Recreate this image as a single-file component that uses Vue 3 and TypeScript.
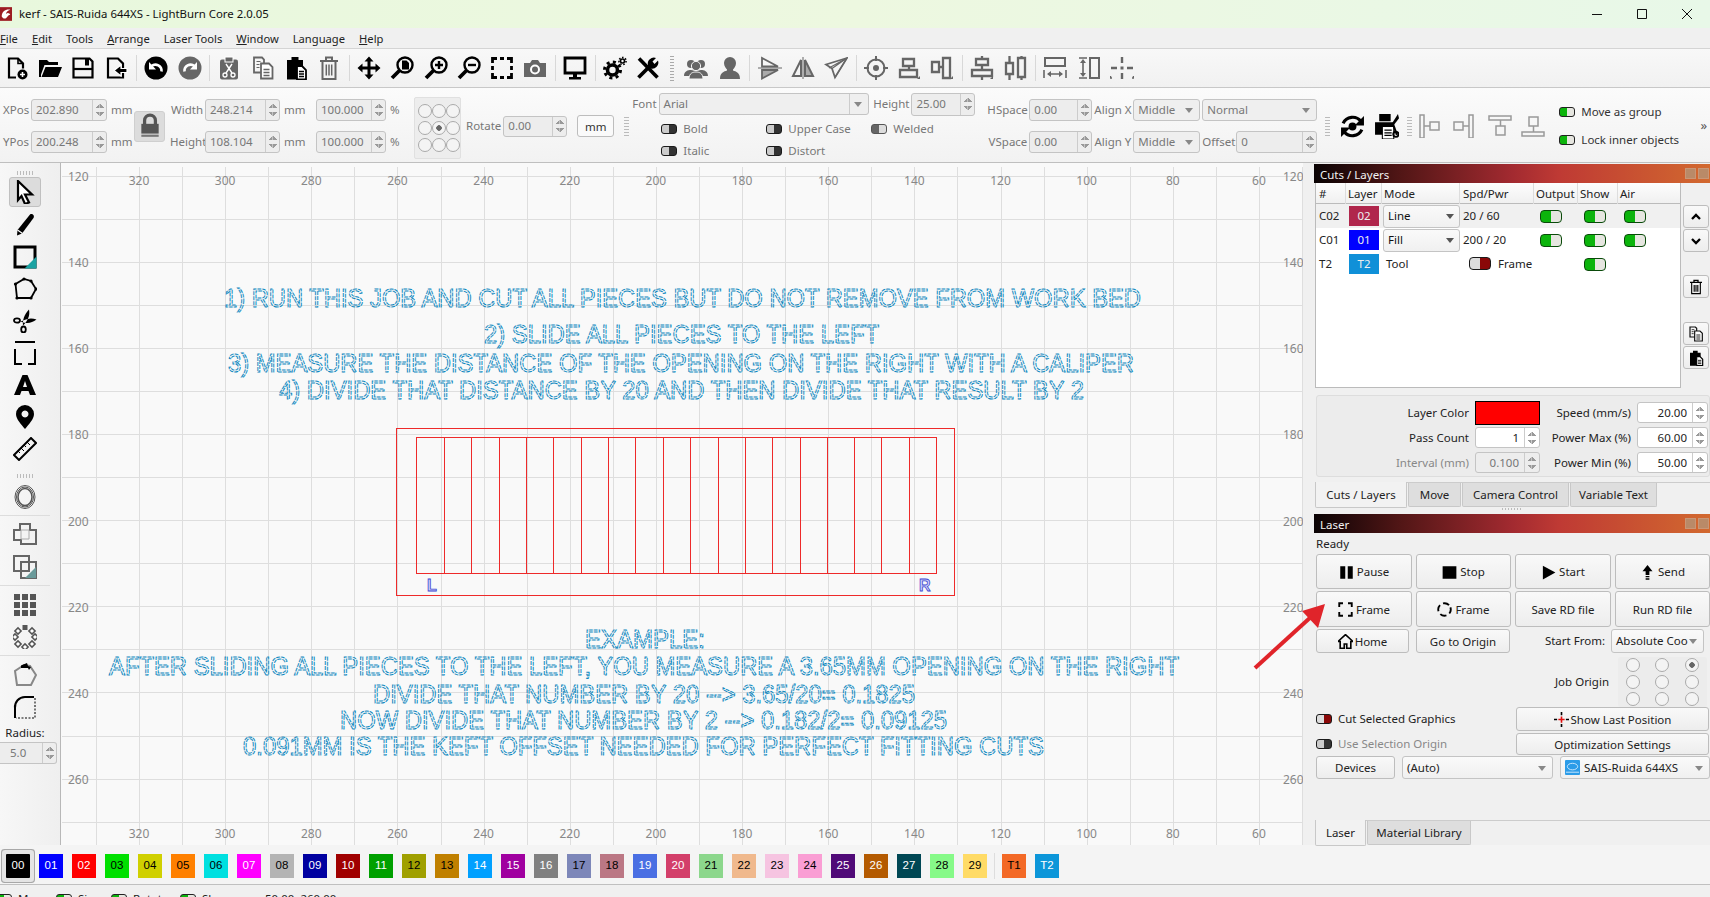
<script setup lang="ts">
const g = '#666'
const k = '#000'
const line = (d: string, c = k, w = 2.2) => `<path d="${d}" fill="none" stroke="${c}" stroke-width="${w}"/>`
const fill = (d: string, c = k) => `<path d="${d}" fill="${c}"/>`
const mag = (inner: string) => `<circle cx="15" cy="9" r="7.5" fill="none" stroke="#000" stroke-width="2.4"/><path d="M9.5 14.5L2 22" stroke="#000" stroke-width="3.8"/>${inner}`

const icons: Record<string, string> = {
  new: line('M11 21.5H4V2.5h9l5 5v5') + line('M13 2.5v5h5', k, 1.6) + '<circle cx="17.5" cy="18.5" r="5" fill="#000"/>' + line('M17.5 16v5M15 18.5h5', '#fff', 1.6),
  open: fill('M1 21V4h8l2 2h9v3H6.5L3 18.5V21zM7.5 11H24l-4 10H3.5z'),
  save: line('M2.5 2.5h16l3 3v16h-19z') + line('M2.5 13h19') + fill('M14 2.5h4v7h-4z'),
  import: line('M4 21.5v-19h10l5 5v14z') + '<path d="M23 12.5h-6v-3.5l-7 5.5 7 5.5v-3.5h6z" fill="#000" stroke="#fff" stroke-width="1.2"/>',
  undo: '<circle cx="12" cy="12" r="11.5" fill="#000"/>' + line('M17.5 15.5a6.2 6.2 0 0 0-10-5.5', '#fff', 2.6) + fill('M5 6v7.5h7z', '#fff'),
  redo: `<circle cx="12" cy="12" r="11.5" fill="${g}"/>` + line('M6.5 15.5a6.2 6.2 0 0 1 10-5.5', '#fff', 2.6) + fill('M19 6v7.5h-7z', '#fff'),
  cut: `<rect x="3" y="3.5" width="18" height="20" rx="2" fill="${g}"/><rect x="8" y="1" width="8" height="5" fill="${g}" stroke="#fff"/>` + line('M9 8l6 9M15 8l-6 9', '#fff', 1.4) + '<circle cx="8" cy="19" r="2" fill="none" stroke="#fff" stroke-width="1.3"/><circle cx="16" cy="19" r="2" fill="none" stroke="#fff" stroke-width="1.3"/>',
  copy: line('M3 1.5h8l2 2v13H3z', g, 1.8) + `<path d="M10 7.5h8l3.5 3.5v11.5H10z" fill="#fff" stroke="${g}" stroke-width="1.8"/>` + line('M12.5 13.5h6M12.5 16.5h6M12.5 19.5h6', g, 1.4) + line('M5.5 5.5h4M5.5 8.5h3M5.5 11.5h3', g, 1.2),
  paste: fill('M3 4h4.5V1h7v3H19v6h-6v13.5H3z') + '<path d="M13 10h5l4 4v9.5h-9z" fill="#fff" stroke="#000" stroke-width="1.8"/>' + line('M15 15.5h5M15 18h5M15 20.5h5', k, 1.3),
  delete: line('M3 5h18M9 5V1.5h6V5', g, 2) + line('M5.5 5v18h13V5', g, 2) + line('M9.3 8.5v11M12 8.5v11M14.7 8.5v11', g, 1.5),
  move: fill('M12 .5l4.5 5h-3V10.5h5v-3l5 4.5-5 4.5v-3h-5v5h3l-4.5 5-4.5-5h3v-5h-5v3L.5 12l5-4.5v3h5v-5h-3z'),
  zoompage: mag(fill('M12 4.5h4.5l2.5 2.5v6.5h-7z')),
  zoomin: mag(line('M15 5v8M11 9h8', k, 2.4)),
  zoomout: mag(line('M11 9h8', k, 2.4)),
  marquee: line('M2.5 7V2.5H7M17 2.5h4.5V7M21.5 17v4.5H17M7 21.5H2.5V17M10 2.5h4M10 21.5h4M2.5 10v4M21.5 10v4', k, 2.8),
  camera: fill('M1 7h6l2-3h6l2 3h6v14H1z', g) + '<circle cx="12" cy="13.5" r="5" fill="#fff"/>' + `<circle cx="12" cy="13.5" r="3" fill="${g}"/>`,
  monitor: line('M2 2h20v15H2z', k, 2.8) + fill('M10 18h4v3h4v2.5H6V21h4z'),
  gears: '<circle cx="9.5" cy="14" r="5" fill="none" stroke="#000" stroke-width="3.6"/><circle cx="9.5" cy="14" r="8" fill="none" stroke="#000" stroke-width="3" stroke-dasharray="3 3.3"/><circle cx="19.5" cy="5" r="2" fill="none" stroke="#000" stroke-width="1.6"/><circle cx="19.5" cy="5" r="3.6" fill="none" stroke="#000" stroke-width="1.5" stroke-dasharray="1.6 1.6"/>',
  tools: line('M3 2.5l18.5 19', k, 3.6) + line('M2.5 21.5L14 10', k, 3.8) + fill('M12 9.5A6.2 6.2 0 0 1 20 2l-3.5 3.5 2 2.5 3.5-3.5a6.2 6.2 0 0 1-7.5 8z'),
  people: `<g fill="${g}"><circle cx="7" cy="8" r="4"/><circle cx="17" cy="8" r="4"/><path d="M0 20c0-5 4-6 7-6l5 1 5-1c3 0 7 1 7 6z"/></g><circle cx="12" cy="10" r="4.6" fill="${g}" stroke="#f3f3f3"/><path d="M5 23c0-6 4-7 7-7s7 1 7 7z" fill="${g}" stroke="#f3f3f3"/>`,
  person: fill('M12 1a6 6 0 0 1 6 6c0 3-2 5.500-3 6.500v1c3 1 7 2 7 8.500H2c0-6.500 4-7.500 7-8.500v-1c-1-1-3-3.500-3-6.500a6 6 0 0 1 6-6z', g),
  flip: line('M4 2v8.500l16 0z', g, 1.8) + fill('M4 14v8.500l16-8.500z', '#aaa') + line('M4 14v8.500l16-8.500z', g, 1.8) + line('M0 12h24', g, 1),
  mirror: line('M10 4v16H2z', g, 2) + fill('M14 4v16h8z', '#aaa') + line('M14 4v16h8z', g, 2) + line('M12 1v22', g, 1),
  fold: line('M23 2L2 8.500l6 4 3 9z', g, 1.8) + line('M23 2L8 12.500M23 2L11 21.500M23 2L5 12', g, 1.2),
  target: `<circle cx="12" cy="12" r="8.500" fill="none" stroke="${g}" stroke-width="2"/><circle cx="12" cy="12" r="3" fill="${g}"/>` + line('M12 0v5M12 19v5M0 12h5M19 12h5', g, 2),
  algc: line('M6 3h11v7H6zM3 14h17v7H3zM12 10v4', g, 2.3) + fill('M20 23l3-3v3z', g),
  algh: line('M2 6h7v10H2zM13 2h7v20h-7zM9 11h4', g, 2.3) + fill('M20 23l3-3v3z', g),
  algv: line('M6 3h12v6H6zM2 14h20v6H2zM12 0v3M12 9v5M12 20v4', g, 2.300) + fill('M20 23l3-3v3z', g),
  algw: line('M2 7h7v11H2zM14 2h7v19h-7zM5.500 0v7M5.500 18v6M17.500 0v2M17.500 21v3', g, 2.300),
  dist1: line('M2 2h20v8H2z', g, 2) + line('M1 14v8M23 14v8M5 18h14', g, 1.6) + fill('M4 18l4-3v6zM20 18l-4-3v6z', g),
  dist2: line('M13 2h9v20h-9z', g, 2) + line('M2 2h8M2 22h8M6 5v14', g, 1.600) + fill('M6 3l-3 4h6zM6 21l-3-4h6z', g),
  center: line('M12 1v6M12 17v6M1 12h6M17 12h6', g, 2.4) + fill('M10.500 10.500h3v3h-3z', g) + line('M22 22h1.500v-2', g, 1.5) + line('M2 22H.500v-2', g, 1.5),
  sync: '<circle cx="12" cy="12" r="3.800" fill="#000"/>' + line('M3 9A10 10 0 0 1 20 7M21 15A10 10 0 0 1 4 17', k, 3) + fill('M23 2v9h-9zM1 22v-9h9z'),
  printcut: fill('M5 0h11v7H5zM1 8h18v12H1z') + '<rect x="8" y="12" width="11" height="12" fill="#fff" stroke="#000"/>' + line('M10 15.500h7M10 18h7M10 20.500h7', k, 1.200) + line('M22 20L18 9', k, 2) + fill('M23 0l1 4-6 8-2-1z') + '<circle cx="21" cy="19.500" r="2.500" fill="none" stroke="#000" stroke-width="1.800"/>',
  disa1: line('M2 1h4v23H2zM12 8h9v8h-9zM6 12h6', '#999', 1.500),
  disa2: line('M18 1h4v23h-4zM3 8h9v8H3zM12 12h6', '#999', 1.500),
  disa3: line('M1 2h22v4H1zM8 12h9v9H8zM12.500 6v6', '#999', 1.500),
  disa4: line('M1 18h22v4H1zM8 3h9v9H8zM12.500 12v6', '#999', 1.500),
  pointer: '<path d="M5 1l14 13.500h-7l4 8-4 1.500-3.500-8L5 20z" fill="#fff" stroke="#000" stroke-width="2.200"/>',
  pencil: fill('M17 1.500c2-1.500 5 1 3.500 3.500L9 20.500l-5 2 .5-5.500z') + line('M4.500 17l5 3.500', '#fff', 1.200),
  rect: line('M2 2h20v20H2z', k, 3) + fill('M23.500 11.500v12H11.500z', '#1aa3a3'),
  poly: line('M4 21L2.500 7 11 2l7 2 5 8-5 9z', k, 1.800) + '<g fill="#000"><circle cx="4" cy="21" r="1.600"/><circle cx="2.500" cy="7" r="1.600"/><circle cx="11" cy="2" r="1.600"/><circle cx="18" cy="4" r="1.600"/><circle cx="23" cy="12" r="1.600"/><circle cx="18" cy="21" r="1.600"/></g>',
  scissors: '<ellipse cx="4" cy="11.500" rx="3" ry="2.200" fill="none" stroke="#000" stroke-width="1.800"/><ellipse cx="10.500" cy="20.500" rx="2.300" ry="3" fill="none" stroke="#000" stroke-width="1.800"/>' + fill('M7.500 12.500c3 1 5 1.500 7 1.500 3 0 6-1.500 9-3.500-3-1-6-1.500-9-.5-2 .5-4 1.500-7 2.500zM10 16.500c-.500-5 1-11 6-16 .500 3 .500 6-1 9-1 2.500-3 5-5 7z'),
  cutshape: line('M2 1h20M2 8v15h7M22 8v15h-7', k, 2),
  text: fill('M9.500 2h5L23 22h-6l-1.500-4h-7L7 22H1zM10 14h4l-2-6z'),
  pin: '<path fill-rule="evenodd" d="M12 0a9 9 0 0 1 9 9c0 5-5 10-9 15-4-5-9-10-9-15a9 9 0 0 1 9-9zm0 5.500a3.500 3.500 0 1 0 .01 0z" fill="#000"/>',
  ruler: line('M1 18L18 1l5 5L6 23z', k, 2) + line('M5 14l2 2M8 11l3 3M11 8l2 2M14 5l3 3', k, 1),
  offset: '<ellipse cx="12" cy="12" rx="10" ry="11.500" fill="none" stroke="#555" stroke-width="1"/><ellipse cx="12" cy="12" rx="8.500" ry="10" fill="none" stroke="#555" stroke-width="1"/><ellipse cx="12" cy="12" rx="7" ry="8.500" fill="none" stroke="#555" stroke-width="1.500"/>',
  union: line('M1 7h6V1h10v6h6v14H8v-4H1z', g, 2) + line('M8 7h8v9H8z', '#aaa', 1),
  subtract: line('M1 1h15v15H1z', g, 2) + line('M8 7h15v16H8z', g, 2) + fill('M23 12v11H12z', '#6a9a9a'),
  grid: `<g fill="#555">${[1, 9, 17].flatMap((y) => [1, 9, 17].map((x) => `<rect x="${x}" y="${y}" width="6" height="6"/>`)).join('')}</g>`,
  carray: `<g fill="#fff" stroke="#555" stroke-width="1.500">${[[19, 6], [22, 12], [19, 19], [12, 22], [5, 19], [2, 12], [5, 6]].map(([x, y]) => `<rect x="${x - 2.200}" y="${y - 2.200}" width="4.400" height="4.400" transform="rotate(45 ${x} ${y})"/>`).join('')}</g><rect x="9.500" y="0" width="5" height="5" fill="#555"/>`,
  polyedit: line('M4 22L2 8l9-6 6 1 6 9-5 10z', '#888', 2) + fill('M8 2.500l6-2.500 1 3 3 1-2 3-1-2-7 0z'),
  corner: line('M2 23V13A10 10 0 0 1 12 2h9', k, 2) + '<path d="M22 3v20H3" fill="none" stroke="#555" stroke-width="1.600" stroke-dasharray="2 1.500"/>',
}

type Tb = { i?: string; sep?: boolean; handle?: boolean }
const toolbar: Tb[] = [
  { i: 'new' }, { i: 'open' }, { i: 'save' }, { i: 'import' }, { sep: true },
  { i: 'undo' }, { i: 'redo' }, { sep: true },
  { i: 'cut' }, { i: 'copy' }, { i: 'paste' }, { i: 'delete' }, { sep: true },
  { i: 'move' }, { i: 'zoompage' }, { i: 'zoomin' }, { i: 'zoomout' }, { i: 'marquee' }, { i: 'camera' }, { sep: true },
  { i: 'monitor' }, { sep: true }, { i: 'gears' }, { i: 'tools' }, { handle: true },
  { i: 'people' }, { i: 'person' }, { sep: true },
  { i: 'flip' }, { i: 'mirror' }, { i: 'fold' }, { sep: true },
  { i: 'target' }, { i: 'algc' }, { i: 'algh' }, { sep: true },
  { i: 'algv' }, { i: 'algw' }, { sep: true },
  { i: 'dist1' }, { i: 'dist2' }, { i: 'center' },
]

const sideTop = ['pencil', 'rect', 'poly', 'scissors', 'cutshape', 'text', 'pin', 'ruler']
const menus = [
  { u: 'F', r: 'ile' }, { u: 'E', r: 'dit' }, { u: '', r: 'Tools' }, { u: 'A', r: 'rrange' },
  { u: '', r: 'Laser Tools' }, { u: 'W', r: 'indow' }, { u: '', r: 'Language' }, { u: 'H', r: 'elp' },
]

const snap = (v: number) => Math.floor(v) + 0.5
const xGrid = Array.from({ length: 28 }, (_, n) => snap(96.4 + n * 43.08))
const yGrid = Array.from({ length: 16 }, (_, n) => snap(176 + n * 43.08))
const xLabels = Array.from({ length: 14 }, (_, n) => ({ x: 139 + n * 86.15, t: String(320 - n * 20) }))
const yLabels = Array.from({ length: 8 }, (_, n) => ({ y: 176 + n * 86.15, t: String(120 + n * 20) }))
const cuts = [444, 471.5, 499, 526, 553.5, 581, 608.5, 635.5, 663, 690.5, 718, 745, 772.5, 800, 827, 854.5, 881.5, 909].map(snap)

const jobLines = [
  { x: 224, y: 306.5, w: 917, t: '1) RUN THIS JOB AND CUT ALL PIECES BUT DO NOT REMOVE FROM WORK BED' },
  { x: 484, y: 342.5, w: 395, t: '2) SLIDE ALL PIECES TO THE LEFT' },
  { x: 228, y: 371.5, w: 906, t: '3) MEASURE THE DISTANCE OF THE OPENING ON THE RIGHT WITH A CALIPER' },
  { x: 279, y: 399, w: 805, t: '4) DIVIDE THAT DISTANCE BY 20 AND THEN DIVIDE THAT RESULT BY 2' },
  { x: 585, y: 648, w: 120, t: 'EXAMPLE:' },
  { x: 109, y: 675, w: 1070, t: 'AFTER SLIDING ALL PIECES TO THE LEFT, YOU MEASURE A 3.65MM OPENING ON THE RIGHT' },
  { x: 373, y: 703, w: 542, t: 'DIVIDE THAT NUMBER BY 20 --> 3.65/20= 0.1825' },
  { x: 340, y: 729, w: 607, t: 'NOW DIVIDE THAT NUMBER BY 2 --> 0.182/2= 0.09125' },
  { x: 243, y: 755, w: 801, t: '0.091MM IS THE KEFT OFFSET NEEDED FOR PERFECT FITTING CUTS' },
]

const swatches = [
  ['00', '#000000', '#fff'], ['01', '#0000ff', '#fff'], ['02', '#ff0000', '#fff'], ['03', '#00e000', '#000'],
  ['04', '#d0d000', '#000'], ['05', '#ff8000', '#000'], ['06', '#00e0e0', '#000'], ['07', '#ff00ff', '#fff'],
  ['08', '#b4b4b4', '#000'], ['09', '#0000a0', '#fff'], ['10', '#a00000', '#fff'], ['11', '#00a000', '#fff'],
  ['12', '#a0a000', '#000'], ['13', '#c08000', '#000'], ['14', '#00a0ff', '#fff'], ['15', '#a000a0', '#fff'],
  ['16', '#808080', '#fff'], ['17', '#7d87b9', '#000'], ['18', '#bb7784', '#000'], ['19', '#4a6fe3', '#fff'],
  ['20', '#d33f6a', '#fff'], ['21', '#8cd78c', '#000'], ['22', '#f0b98d', '#000'], ['23', '#f6c4e1', '#000'],
  ['24', '#fa9ed4', '#000'], ['25', '#500a78', '#fff'], ['26', '#b45a00', '#fff'], ['27', '#004754', '#fff'],
  ['28', '#86fa88', '#000'], ['29', '#ffdb66', '#000'],
]
</script>

<template>
  <div class="app">
    <header class="titlebar">
      <svg class="logo" viewBox="0 0 14 16"><rect width="14" height="16" fill="#9c1c22" /><path d="M2 11c0-6 5-9 10-8-3 1-5 3-5 5 2-2 4-1 5 1-2 0-3 2-5 4-2 1-4 0-5-2z" fill="#fff" /></svg>
      <span class="title">kerf - SAIS-Ruida 644XS - LightBurn Core 2.0.05</span>
      <div class="wincontrols">
        <svg viewBox="0 0 12 12"><path d="M1 6.500h10" stroke="#111" /></svg>
        <svg viewBox="0 0 12 12"><path d="M1.500 1.500h9v9h-9z" fill="none" stroke="#111" /></svg>
        <svg viewBox="0 0 12 12"><path d="M1 1l10 10M11 1L1 11" stroke="#111" /></svg>
      </div>
    </header>

    <nav class="menubar">
      <span v-for="m in menus" :key="m.r"><u>{{ m.u }}</u>{{ m.r }}</span>
    </nav>

    <div class="toolbar">
      <template v-for="(t, n) in toolbar" :key="n">
        <span v-if="t.sep" class="tsep"></span>
        <span v-else-if="t.handle" class="thandle"></span>
        <svg v-else class="ticon" viewBox="0 0 24 24" v-html="icons[t.i as string]"></svg>
      </template>
    </div>

    <div class="props">
      <div class="pgrid g1">
        <label>XPos</label><div class="spin dis"><span>202.890</span><i></i></div><em>mm</em>
        <label>YPos</label><div class="spin dis"><span>200.248</span><i></i></div><em>mm</em>
      </div>
      <div class="lock">
        <svg viewBox="0 0 24 24"><path d="M7 11V7a5 5 0 0 1 10 0v4" fill="none" stroke="#555" stroke-width="3" /><rect x="4" y="10" width="16" height="9" fill="#555" /><rect x="4" y="20" width="16" height="2" fill="#777" /></svg>
      </div>
      <div class="pgrid g2">
        <label>Width</label><div class="spin dis"><span>248.214</span><i></i></div><em>mm</em><div class="spin dis"><span>100.000</span><i></i></div><em>%</em>
        <label>Height</label><div class="spin dis"><span>108.104</span><i></i></div><em>mm</em><div class="spin dis"><span>100.000</span><i></i></div><em>%</em>
      </div>
      <div class="originbox">
        <span v-for="n in 9" :key="n" class="radio" :class="{ dot: n === 5 }"></span>
      </div>
      <div class="rotate"><label>Rotate</label><div class="spin dis"><span>0.00</span><i></i></div></div>
      <button class="mmbtn">mm</button>
      <span class="phandle"></span>
      <div class="fontgroup">
        <div class="frow">
          <label>Font</label>
          <div class="select dis fontsel"><span>Arial</span></div>
          <label class="hlabel">Height</label>
          <div class="spin dis hspin"><span>25.00</span><i></i></div>
        </div>
        <div class="ftoggles">
          <span class="chk"><b class="tog sm off"></b>Bold</span>
          <span class="chk"><b class="tog sm off"></b>Upper Case</span>
          <span class="chk"><b class="tog sm wel"></b>Welded</span>
          <span class="chk"><b class="tog sm off"></b>Italic</span>
          <span class="chk"><b class="tog sm off"></b>Distort</span>
        </div>
      </div>
      <div class="pgrid g3">
        <label>HSpace</label><div class="spin dis"><span>0.00</span><i></i></div><label>Align X</label><div class="select dis"><span>Middle</span></div><div class="select dis span2"><span>Normal</span></div>
        <label>VSpace</label><div class="spin dis"><span>0.00</span><i></i></div><label>Align Y</label><div class="select dis"><span>Middle</span></div><label class="off">Offset</label><div class="spin dis"><span>0</span><i></i></div>
      </div>
      <span class="phandle h2"></span>
      <svg class="bigi sync" viewBox="0 0 24 24" v-html="icons.sync"></svg>
      <svg class="bigi print" viewBox="0 0 24 24" v-html="icons.printcut"></svg>
      <span class="phandle h3"></span>
      <svg class="dis-i" viewBox="0 0 24 24" v-html="icons.disa1"></svg>
      <svg class="dis-i" viewBox="0 0 24 24" v-html="icons.disa2"></svg>
      <svg class="dis-i d3" viewBox="0 0 24 24" v-html="icons.disa3"></svg>
      <svg class="dis-i" viewBox="0 0 24 24" v-html="icons.disa4"></svg>
      <div class="groupchecks">
        <span class="chk on"><b class="tog sm gr"></b>Move as group</span>
        <span class="chk on"><b class="tog sm gr"></b>Lock inner objects</span>
      </div>
      <span class="more">»</span>
    </div>

    <main class="middle">
      <aside class="sidebar">
        <span class="shandle"></span>
        <div class="selbtn"><svg class="sicon" viewBox="0 0 24 24" v-html="icons.pointer"></svg></div>
        <svg v-for="s in sideTop" :key="s" class="sicon" viewBox="0 0 24 24" v-html="icons[s]"></svg>
        <span class="shandle h"></span>
        <svg class="sicon" viewBox="0 0 24 24" v-html="icons.offset"></svg>
        <hr />
        <svg class="sicon" viewBox="0 0 24 24" v-html="icons.union"></svg>
        <svg class="sicon" viewBox="0 0 24 24" v-html="icons.subtract"></svg>
        <hr />
        <svg class="sicon" viewBox="0 0 24 24" v-html="icons.grid"></svg>
        <svg class="sicon" viewBox="0 0 24 24" v-html="icons.carray"></svg>
        <hr />
        <svg class="sicon" viewBox="0 0 24 24" v-html="icons.polyedit"></svg>
        <svg class="sicon" viewBox="0 0 24 24" v-html="icons.corner"></svg>
        <span class="radlabel">Radius:</span>
        <div class="spin dis radius"><span>5.0</span><i></i></div>
      </aside>

      <section class="canvas">
        <svg class="workspace" viewBox="61 163 1242 682">
          <rect x="61" y="163" width="1242" height="682" fill="#f9f9f9" />
          <line v-for="x in xGrid" :key="x" :x1="x" :x2="x" y1="167" y2="845" class="gl" />
          <line v-for="y in yGrid" :key="y" x1="62" x2="1303" :y1="y" :y2="y" class="gl" />
          <line x1="1302.500" x2="1302.500" y1="167" y2="845" class="gl" />
          <g class="lbl">
            <text v-for="l in xLabels" :key="l.t" :x="l.x" y="185" text-anchor="middle">{{ l.t }}</text>
            <text v-for="l in xLabels" :key="l.t + 'b'" :x="l.x" y="838" text-anchor="middle">{{ l.t }}</text>
            <text v-for="l in yLabels" :key="l.t" x="68" :y="l.y + 5">{{ l.t }}</text>
            <text v-for="l in yLabels" :key="l.t + 'r'" x="1283" :y="l.y + 5">{{ l.t }}</text>
          </g>
          <text v-for="l in jobLines" :key="l.t" class="job" :x="l.x" :y="l.y" :textLength="l.w" lengthAdjust="spacingAndGlyphs">{{ l.t }}</text>
          <g class="red">
            <rect x="396.500" y="428.500" width="558" height="167" />
            <rect x="416.500" y="437.500" width="520" height="136" />
            <line v-for="x in cuts" :key="x" :x1="x" :x2="x" y1="437.500" y2="573.500" />
          </g>
          <text class="mark" x="427" y="591">L</text>
          <text class="mark" x="919" y="591">R</text>
        </svg>
      </section>

      <aside class="panels">
        <section class="cuts">
          <div class="ptitle">Cuts / Layers<span class="pbtns"><i></i><i></i></span></div>
          <div class="cutsbody">
            <div class="table">
              <div class="trow thead"><span>#</span><span>Layer</span><span>Mode</span><span>Spd/Pwr</span><span>Output</span><span>Show</span><span>Air</span></div>
              <div class="trow sel">
                <span>C02</span><span class="badge b02">02</span>
                <div class="select modesel"><span>Line</span></div>
                <span>20 / 60</span><b class="tog gr"></b><b class="tog gr"></b><b class="tog gr"></b>
              </div>
              <div class="trow">
                <span>C01</span><span class="badge b01">01</span>
                <div class="select modesel"><span>Fill</span></div>
                <span>200 / 20</span><b class="tog gr"></b><b class="tog gr"></b><b class="tog gr"></b>
              </div>
              <div class="trow">
                <span>T2</span><span class="badge bt2">T2</span>
                <span class="toolmode">Tool</span>
                <span class="framecell"><b class="tog rd"></b>Frame</span><span></span><b class="tog gr"></b><span></span>
              </div>
            </div>
            <div class="sidebtns">
              <button><svg viewBox="0 0 24 24"><path d="M6 15l6-6 6 6" fill="none" stroke="#000" stroke-width="3.500" /></svg></button>
              <button><svg viewBox="0 0 24 24"><path d="M6 9l6 6 6-6" fill="none" stroke="#000" stroke-width="3.500" /></svg></button>
              <button class="gap1"><svg viewBox="0 0 24 24"><path d="M3 5h18M9 5V2h6v3" fill="none" stroke="#000" stroke-width="2" /><path d="M5.500 5v17h13V5M9.300 9v10M12 9v10M14.700 9v10" fill="none" stroke="#000" stroke-width="1.700" /></svg></button>
              <button class="gap2"><svg viewBox="0 0 24 24" v-html="icons.copy.replaceAll(g, '#111')"></svg></button>
              <button><svg viewBox="0 0 24 24" v-html="icons.paste"></svg></button>
            </div>
          </div>
          <div class="layerform">
            <label>Layer Color</label><span class="swatchred"></span><label>Speed (mm/s)</label><div class="spin num"><span>20.00</span><i></i></div>
            <label>Pass Count</label><div class="spin num"><span>1</span><i></i></div><label>Power Max (%)</label><div class="spin num"><span>60.00</span><i></i></div>
            <label class="muted">Interval (mm)</label><div class="spin num dis"><span>0.100</span><i></i></div><label>Power Min (%)</label><div class="spin num"><span>50.00</span><i></i></div>
          </div>
          <div class="tabs">
            <span class="tab active t1">Cuts / Layers</span><span class="tab t2">Move</span><span class="tab t3">Camera Control</span><span class="tab t4">Variable Text</span>
          </div>
          <span class="vhandle"></span>
        </section>

        <section class="laser">
          <div class="ptitle">Laser<span class="pbtns"><i></i><i></i></span></div>
          <div class="ready">Ready</div>
          <div class="lbtns r1">
            <button><svg viewBox="0 0 24 24"><path d="M2 2h8v20H2zM14 2h8v20h-8z" /></svg>Pause</button>
            <button><svg viewBox="0 0 24 24"><path d="M1 2h22v20H1z" /></svg>Stop</button>
            <button><svg viewBox="0 0 24 24"><path d="M3 1l20 11L3 23z" /></svg>Start</button>
            <button><svg viewBox="0 0 24 24"><path d="M12 0l8 10h-5v6H9v-6H4zM9 17.500h6v2H9zM9 21h6v2.500H9z" /></svg>Send</button>
          </div>
          <div class="lbtns r2">
            <button><svg viewBox="0 0 24 24"><path d="M2 8V2h6M16 2h6v6M22 16v6h-6M8 22H2v-6" fill="none" stroke="#000" stroke-width="3" /></svg>Frame</button>
            <button><svg viewBox="0 0 24 24"><circle cx="12" cy="12" r="10" fill="none" stroke="#000" stroke-width="3" stroke-dasharray="10 5.700" transform="rotate(-20 12 12)" /></svg>Frame</button>
            <button>Save RD file</button>
            <button>Run RD file</button>
          </div>
          <div class="lrow3">
            <button class="home"><svg viewBox="0 0 24 24"><path d="M12 1L0 12h3.500v11H10v-7h4v7h6.500V12H24z" fill="none" stroke="#000" stroke-width="2.600" /></svg>Home</button>
            <button class="goto">Go to Origin</button>
            <label>Start From:</label>
            <div class="select sf"><span>Absolute Coo</span></div>
          </div>
          <div class="lrow4">
            <label>Job Origin</label>
            <div class="jobbox"><span v-for="n in 9" :key="n" class="radio" :class="{ dot: n === 3 }"></span></div>
          </div>
          <div class="lrow5">
            <span class="chk b"><b class="tog sm rd"></b>Cut Selected Graphics</span>
            <button><svg viewBox="0 0 24 24"><path d="M12 0v5M12 19v5M0 12h5M19 12h5" stroke="#000" stroke-width="2.600" /><path d="M12 7v10M7 12h10" stroke="#e01010" stroke-width="2.600" /></svg>Show Last Position</button>
          </div>
          <div class="lrow5 r6">
            <span class="chk muted"><b class="tog sm off"></b>Use Selection Origin</span>
            <button>Optimization Settings</button>
          </div>
          <div class="lrow7">
            <button>Devices</button>
            <div class="select auto"><span>(Auto)</span></div>
            <div class="select device"><svg viewBox="0 0 16 16"><rect width="16" height="16" rx="1" fill="#2c9ce8" /><ellipse cx="8" cy="7" rx="5.500" ry="3.500" fill="none" stroke="#cfeaff" /><path d="M1 13h14" stroke="#cfeaff" /></svg><span>SAIS-Ruida 644XS</span></div>
          </div>
          <div class="tabs lasertabs">
            <span class="tab active">Laser</span><span class="tab">Material Library</span>
          </div>
        </section>
      </aside>
    </main>

    <div class="palette">
      <span v-for="s in swatches" :key="s[0]" class="sw" :class="{ cur: s[0] === '00' }" :style="{ background: s[1], color: s[2] }">{{ s[0] }}</span>
      <span class="palsep"></span>
      <span class="sw" style="background: #f36926; color: #000">T1</span>
      <span class="sw" style="background: #0c96d9; color: #fff">T2</span>
    </div>

    <footer class="status">
      <span class="s1"><b class="tog sm gr"></b>Move</span>
      <span class="s2"><b class="tog sm gr"></b>Size</span>
      <span class="s3"><b class="tog sm gr"></b>Rotate</span>
      <span class="s4"><b class="tog sm gr"></b>Shear</span>
      <span class="coords">50.00, 260.00</span>
    </footer>

    <svg class="arrow" viewBox="0 0 100 90">
      <path d="M3 86L60 34" stroke="#e0242a" stroke-width="4" fill="none" />
      <path d="M73 22L50 29 66 46z" fill="#e0242a" />
    </svg>
  </div>
</template>

<style>
html,
body {
  margin: 0;
  background: #f0f0f0;
  overflow: hidden;
}
</style>

<style scoped>
.app {
  --ui: "Noto Sans", "Open Sans", sans-serif;
  position: relative;
  width: 1710px;
  height: 897px;
  overflow: hidden;
  display: flex;
  flex-direction: column;
  background: #f0f0f0;
  color: #222;
  font: 11.5px/1.2 var(--ui);
  white-space: nowrap;
}
button {
  font: inherit;
  color: inherit;
  padding: 1px 0 0;
  display: flex;
  align-items: center;
  justify-content: center;
  background: linear-gradient(#f9f9f9, #ededed);
  border: 1px solid #bdbdbd;
  border-radius: 3px;
}
label,
em {
  font-style: normal;
}

.titlebar {
  height: 28px;
  flex: none;
  display: flex;
  align-items: center;
  background: linear-gradient(90deg, #e8f8dd, #edf8e0 50%, #e8f8e8);
  font-size: 11.4px;
  color: #111;
}
.logo {
  width: 12px;
  height: 16px;
  margin-right: 7px;
}
.wincontrols {
  margin-left: auto;
  display: flex;
  margin-right: 17px;
  gap: 33px;
}
.wincontrols svg {
  width: 12px;
  height: 12px;
}

.menubar {
  height: 20px;
  flex: none;
  display: flex;
  align-items: center;
  gap: 14px;
  background: #f0f0f0;
  font-size: 11.2px;
  padding-top: 1px;
  box-sizing: border-box;
}

.toolbar {
  flex: none;
  display: flex;
  align-items: center;
  border-top: 1px solid #d4d4d4;
  border-bottom: 1px solid #c8c8c8;
  background: linear-gradient(#f8f8f8, #f1f1f1);
  box-sizing: border-box;
  height: 40px;
}
.ticon {
  width: 24px;
  height: 24px;
  flex: none;
  margin: 0 4.650px;
}
.tsep {
  width: 1px;
  height: 26px;
  margin: 0 2.750px;
  background: #d8d8d8;
  flex: none;
}
.thandle {
  width: 4px;
  height: 26px;
  margin: 0 5.500px;
  flex: none;
  background: radial-gradient(circle, #aaa 0.6px, transparent 0.8px) 0 0/2px 3px;
}

.props {
  height: 75px;
  flex: none;
  display: flex;
  align-items: center;
  box-sizing: border-box;
  padding-top: 2px;
  border-bottom: 1px solid #bfbfbf;
  background: linear-gradient(#fbfbfb, #f2f2f2);
  color: #777;
}
.pgrid {
  display: grid;
  row-gap: 10px;
  align-items: center;
  flex: none;
}
.pgrid > label {
  text-align: right;
}
.g1 {
  margin-left: 3px;
  grid-template-columns: 26px 76px 26px;
  column-gap: 2px;
}
.g1 em,
.g2 em {
  padding-left: 2px;
}
.lock {
  width: 31px;
  height: 31px;
  flex: none;
  margin-left: -1px;
  background: #dcdcdc;
  border: 1px solid #cfcfcf;
  border-radius: 3px;
  box-sizing: border-box;
  display: flex;
  align-items: center;
  justify-content: center;
}
.lock svg {
  width: 26px;
  height: 26px;
}
.g2 {
  margin-left: 5px;
  grid-template-columns: 33px 75px 32px 70px 12px;
  column-gap: 2px;
}
.spin {
  position: relative;
  box-sizing: border-box;
  height: 22px;
  border: 1px solid #c4c4c4;
  border-radius: 3px;
  background: #fff;
  display: flex;
  align-items: center;
  padding-left: 4px;
  padding-right: 14px;
}
.spin.dis {
  background: #ededed;
  color: #777;
}
.spin i {
  position: absolute;
  right: 0;
  top: 0;
  bottom: 0;
  width: 13px;
  border-left: 1px solid #ccc;
  background:
    linear-gradient(135deg, transparent 50%, #999 50%) 2px calc(50% - 4px)/4.500px 4px no-repeat,
    linear-gradient(225deg, transparent 50%, #999 50%) 6.500px calc(50% - 4px)/4.500px 4px no-repeat,
    linear-gradient(45deg, transparent 50%, #999 50%) 2px calc(50% + 4px)/4.500px 4px no-repeat,
    linear-gradient(315deg, transparent 50%, #999 50%) 6.500px calc(50% + 4px)/4.500px 4px no-repeat;
}
.originbox {
  width: 47px;
  height: 62px;
  margin-left: 14px;
  margin-top: 4px;
  flex: none;
  box-sizing: border-box;
  padding: 4px 3px;
  background: #ededed;
  border: 1px solid #e0e0e0;
  border-radius: 2px;
  display: grid;
  grid-template-columns: repeat(3, 1fr);
  justify-items: center;
  align-items: center;
}
.radio {
  width: 11px;
  height: 11px;
  border: 1px solid #aaa;
  border-radius: 50%;
  background: #f4f4f4;
  box-sizing: border-box;
  display: block;
}
.dot {
  background: radial-gradient(circle, #666 0 2.500px, #f4f4f4 3px);
}
.originbox .radio {
  width: 14px;
  height: 14px;
}
.rotate {
  display: flex;
  align-items: center;
  margin-left: 5px;
  gap: 2px;
  flex: none;
}
.rotate .spin {
  width: 64px;
  height: 21px;
}
.mmbtn {
  width: 37px;
  height: 22px;
  margin-left: 10px;
  flex: none;
  background: #fafafa;
  color: #333;
}
.phandle {
  width: 5px;
  height: 21px;
  flex: none;
  margin: 0 3px 0 10px;
  background: radial-gradient(circle, #bbb 0.6px, transparent 0.8px) 0 0/2px 3px;
}
.fontgroup {
  width: 343px;
  flex: none;
  margin-top: 2px;
}
.frow {
  display: flex;
  align-items: center;
  height: 24px;
}
.fontsel {
  width: 211px;
  height: 24px;
  margin-left: 2px;
}
.hlabel {
  margin-left: 4px;
}
.hspin {
  width: 64px;
  margin-left: 2px;
  height: 23px;
}
.ftoggles {
  margin-top: 2px;
  margin-left: 29px;
  display: grid;
  grid-template-columns: 105px 105px 100px;
  grid-auto-rows: 22px;
  align-items: center;
}
.chk {
  display: flex;
  align-items: center;
  gap: 6px;
}
.tog {
  display: block;
  box-sizing: border-box;
  width: 22px;
  height: 13px;
  flex: none;
  border: 1.500px solid #1a1a1a;
  border-radius: 4px;
}
.tog.sm {
  width: 16px;
  height: 10px;
  border-radius: 3px;
}
.tog.gr {
  background: linear-gradient(90deg, #0cb40c 52%, #e6e6e0 52%);
  border-color: #0a4a0a;
}
.tog.gr.sm {
  border-color: #222;
}
.tog.rd {
  background: linear-gradient(90deg, #ddd 48%, #8a0808 48%);
}
.tog.off {
  background: linear-gradient(90deg, #ccc 48%, #333 48%);
}
.tog.wel {
  background: linear-gradient(90deg, #666 52%, #ddd 52%);
  border-color: #555;
}
.g3 {
  margin-left: 12px;
  grid-template-columns: 40px 63px 37px 67px 32px 81px;
  column-gap: 2px;
}
.g3 .select {
  height: 22px;
}
.span2 {
  grid-column: span 2;
}
.select {
  position: relative;
  box-sizing: border-box;
  border: 1px solid #c4c4c4;
  border-radius: 3px;
  background: linear-gradient(#fafafa, #f0f0f0);
  display: flex;
  align-items: center;
  padding-left: 4px;
  height: 22px;
  overflow: hidden;
  white-space: nowrap;
}
.select.dis {
  background: #efefef;
  color: #777;
}
.select::after {
  content: "";
  position: absolute;
  right: 6px;
  top: calc(50% - 2px);
  border: 4px solid transparent;
  border-top: 5px solid #888;
  border-bottom: 0;
}
.fontsel::before {
  content: "";
  position: absolute;
  right: 18px;
  top: 0;
  bottom: 0;
  border-left: 1px solid #ccc;
}
.h2 {
  margin: 0 4px 0 8px;
}
.h3 {
  margin: 0 6px 0 8px;
}
.bigi {
  flex: none;
  width: 25px;
  height: 25px;
  margin-left: 6px;
}
.print {
  margin-left: 9px;
}
.dis-i {
  flex: none;
  width: 24px;
  height: 24px;
  margin-right: 9px;
}
.d3 {
  margin-left: 4px;
}
.groupchecks {
  flex: none;
  display: flex;
  flex-direction: column;
  gap: 14px;
  margin-left: 5px;
  color: #333;
}
.more {
  margin-left: auto;
  margin-right: 3px;
  color: #555;
  font-size: 13px;
}

.middle {
  flex: none;
  height: 682px;
  display: flex;
}
.sidebar {
  width: 61px;
  flex: none;
  box-sizing: border-box;
  padding-top: 8px;
  display: flex;
  flex-direction: column;
  align-items: center;
  background: linear-gradient(90deg, #f7f7f7, #efefef);
  border-right: 1px solid #b8b8b8;
  position: relative;
}
.sidebar > * {
  flex: none;
}
.shandle {
  width: 18px;
  height: 4px;
  background: radial-gradient(circle, #bbb 0.6px, transparent 0.8px) 0 0/3px 2px;
  margin-left: -10px;
}
.shandle.h {
  margin-top: 9px;
  margin-bottom: 3px;
}
.selbtn {
  width: 32px;
  height: 30px;
  margin-top: 2px;
  margin-bottom: 2px;
  background: #dcdcdc;
  border: 1px solid #c0c0c0;
  border-radius: 3px;
  display: flex;
  align-items: center;
  justify-content: center;
  box-sizing: border-box;
  margin-left: -10px;
}
.selbtn .sicon {
  margin: 0;
}
.sicon {
  width: 24px;
  height: 24px;
  margin: 4px 0 4px -10px;
}
.sidebar hr {
  width: 50px;
  margin: 2px 0 3px 0;
  align-self: flex-start;
  border: 0;
  border-top: 1px solid #ddd;
}
.radlabel {
  color: #222;
  margin-top: 3px;
  margin-left: -10px;
}
.radius {
  width: 57px;
  align-self: flex-start;
  padding-left: 10px;
  margin-top: 2px;
  border-left: 0;
  border-radius: 0 3px 3px 0;
}

.canvas {
  width: 1242px;
  flex: none;
  background: #f9f9f9;
  margin-left: 0;
}
.workspace {
  display: block;
  width: 1242px;
  height: 682px;
}
.gl {
  stroke: #dedede;
  stroke-width: 1;
}
.lbl text {
  font: 12px var(--ui);
  fill: #888;
}
.job {
  font: 25px "Liberation Sans", Arial, sans-serif;
  fill: none;
  stroke: #0d88c0;
  stroke-width: 1;
  stroke-dasharray: 4 1;
}
.red rect,
.red line {
  fill: none;
  stroke: #ee2a2a;
  stroke-width: 1;
}
.mark {
  font: bold 16px "Liberation Sans", Arial, sans-serif;
  fill: #cfd2f5;
  stroke: #3c46d4;
  stroke-width: 0.800;
}

.panels {
  flex: 1;
  min-width: 0;
  display: flex;
  flex-direction: column;
  padding-left: 11px;
  background: #f0f0f0;
}
.cuts {
  height: 347px;
  flex: none;
  display: flex;
  flex-direction: column;
  position: relative;
}
.ptitle {
  flex: none;
  margin-top: 1px;
  height: 19px;
  line-height: 21px;
  padding-left: 6px;
  color: #f2f2f2;
  display: flex;
  justify-content: space-between;
  background: linear-gradient(90deg, #0a0304, #521616 22%, #a22a30 50%, #bf3a34 62%, #d2692f 100%);
}
.pbtns {
  display: flex;
  gap: 2px;
  margin-right: 1px;
  align-items: center;
}
.pbtns i {
  width: 11px;
  height: 11px;
  border: 1px solid #c99676;
  background: #b98a68;
  box-sizing: border-box;
}
.cutsbody {
  display: flex;
  height: 205px;
  flex: none;
  padding-left: 1px;
}
.table {
  width: 366px;
  height: 205px;
  flex: none;
  box-sizing: border-box;
  border: 1px solid #bbb;
  border-top: 0;
  background: #fff;
}
.trow {
  display: grid;
  grid-template-columns: 30px 36px 78px 74px 44px 40px 1fr;
  height: 24px;
  align-items: center;
}
.trow > span:first-child {
  padding-left: 3px;
}
.thead {
  height: 20px;
  background: linear-gradient(#fdfdfd, #f0f0f0);
  border-bottom: 1px solid #bbb;
}
.thead span {
  border-right: 1px solid #ddd;
  height: 100%;
  line-height: 21px;
  padding-left: 2px;
  box-sizing: border-box;
}
.thead span:last-child {
  border-right: 0;
}
.sel {
  background: #f0f0f0;
}
.badge {
  width: 30px;
  height: 20px;
  margin-left: 3px;
  display: flex;
  align-items: center;
  justify-content: center;
  color: #eee;
}
.b02 {
  background: #b0264c;
}
.b01 {
  background: #0000ff;
}
.bt2 {
  background: #1090d8;
}
.modesel {
  margin-left: 1px;
  width: 77px;
  height: 23px;
  padding-left: 4px;
  color: #111;
}
.modesel::after {
  border-top-color: #555;
  right: 5px;
}
.trow > span:nth-child(4) {
  padding-left: 3px;
}
.trow .tog {
  margin-left: 6px;
}
.toolmode {
  padding-left: 4px;
}
.framecell {
  display: flex;
  align-items: center;
  gap: 7px;
}
.framecell .tog {
  margin-left: 6px;
}
.sidebtns {
  margin-left: 2px;
  padding-top: 22px;
  display: flex;
  flex-direction: column;
  width: 26px;
}
.sidebtns button {
  width: 26px;
  height: 23px;
  flex: none;
  margin-bottom: 1px;
  padding: 0;
}
.sidebtns svg {
  width: 16px;
  height: 16px;
}
.gap1 {
  margin-top: 22px;
}
.gap2 {
  margin-top: 23px;
}
.layerform {
  margin: 7px 0 0 2px;
  height: 82px;
  flex: none;
  box-sizing: border-box;
  padding: 4px 6px 0 0;
  background: #ececec;
  border: 1px solid #ddd;
  border-radius: 3px;
  display: grid;
  grid-template-columns: 152px 65px 85px 71px;
  grid-auto-rows: 25px;
  column-gap: 6px;
  align-items: center;
  color: #222;
}
.layerform > label {
  text-align: right;
}
.muted {
  color: #888;
}
.num {
  height: 21px;
  justify-content: flex-end;
  padding-right: 20px;
}
.num i {
  width: 14px;
}
.swatchred {
  height: 24px;
  background: #ff0000;
  border: 1px solid #000;
  box-sizing: border-box;
}
.tabs {
  flex: none;
  display: flex;
  margin-top: 5px;
  height: 25px;
  border-top: 1px solid #ccc;
  box-sizing: border-box;
  margin-left: 1px;
}
.tab {
  display: flex;
  align-items: center;
  justify-content: center;
  box-sizing: border-box;
  height: 24px;
  background: #dedede;
  border: 1px solid #c8c8c8;
  border-top: 0;
  border-radius: 0 0 2px 2px;
  padding: 0 12px;
  margin-right: 1px;
}
.tab.active {
  background: #f2f2f2;
  height: 26px;
  margin-top: -1px;
}
.t1 {
  width: 92px;
  padding: 0;
}
.t2 {
  width: 53px;
  padding: 0;
}
.t3 {
  width: 107px;
  padding: 0;
}
.t4 {
  width: 87px;
  padding: 0;
}
.vhandle {
  height: 2px;
  width: 22px;
  margin: 1px auto 0;
  background: radial-gradient(circle, #bbb 0.6px, transparent 0.8px) 0 0/3px 2px;
}
.laser {
  flex: 1;
  min-height: 0;
  position: relative;
  display: flex;
  flex-direction: column;
}
.laser .ptitle {
  margin-top: 4px;
}
.ready {
  height: 21px;
  line-height: 21px;
  padding-left: 2px;
  flex: none;
}
.laser button svg {
  flex: none;
}
.lbtns {
  display: grid;
  grid-template-columns: 96px 95px 96px 95px;
  column-gap: 4px;
  margin-left: 2px;
  height: 35px;
  margin-bottom: 2px;
  flex: none;
}
.lbtns.r2 {
  height: 36px;
}
.lbtns svg {
  width: 15px;
  height: 15px;
  margin-right: 3px;
}
.lrow3 {
  display: flex;
  align-items: center;
  height: 24px;
  margin-left: 2px;
  flex: none;
}
.lrow3 button {
  height: 24px;
}
.home {
  width: 93px;
}
.home svg {
  width: 15px;
  height: 15px;
  margin-right: 2px;
}
.goto {
  width: 94px;
  margin-left: 7px;
}
.lrow3 label {
  width: 95px;
  text-align: right;
}
.sf {
  width: 93px;
  height: 24px;
  margin-left: 6px;
  padding-right: 20px;
}
.lrow4 {
  display: flex;
  align-items: center;
  justify-content: flex-start;
  height: 50px;
  margin-top: 4px;
  flex: none;
}
.lrow4 label {
  width: 295px;
  text-align: right;
}
.jobbox {
  margin-left: 9px;
  width: 89px;
  height: 50px;
  background: #ececec;
  border-radius: 2px;
  display: grid;
  grid-template-columns: repeat(3, 1fr);
  align-items: center;
  justify-items: center;
}
.jobbox .radio {
  width: 14px;
  height: 14px;
}
.lrow5 {
  display: flex;
  align-items: center;
  justify-content: space-between;
  height: 24px;
  margin-left: 2px;
  flex: none;
}
.r6 {
  height: 22px;
  margin-top: 2px;
}
.lrow5 button {
  width: 193px;
  height: 24px;
  margin-right: 1px;
}
.r6 button {
  height: 22px;
}
.lrow5 svg {
  width: 15px;
  height: 15px;
  margin-right: 2px;
}
.chk.b {
  color: #222;
}
.lrow7 {
  display: flex;
  align-items: center;
  height: 23px;
  margin: 1px 0 0 2px;
  flex: none;
}
.lrow7 button {
  width: 79px;
  height: 23px;
}
.lrow7 .select {
  height: 23px;
}
.auto {
  width: 151px;
  margin-left: 7px;
}
.device {
  width: 150px;
  margin-left: 7px;
  gap: 4px;
}
.device svg {
  width: 15px;
  height: 15px;
  flex: none;
}
.lasertabs {
  margin-top: auto;
  margin-bottom: 0;
}
.lasertabs .tab:first-child {
  width: 51px;
  padding: 0;
}
.lasertabs .tab:last-child {
  width: 104px;
  padding: 0;
}

.palette {
  height: 40px;
  flex: none;
  box-sizing: border-box;
  padding: 3px 0 0 6px;
  display: flex;
  align-items: center;
  gap: 9px;
  background: #f4f4f4;
  border-bottom: 1px solid #c0c0c0;
}
.sw {
  width: 24px;
  height: 24px;
  flex: none;
  display: flex;
  align-items: center;
  justify-content: center;
  font-family: "Liberation Sans", Arial, sans-serif;
  font-size: 11.500px;
}
.cur {
  box-shadow: 0 0 0 4px #e4e4e4, 0 0 0 5px #a8a8a8;
  border-radius: 1px;
}
.palsep {
  width: 1px;
  height: 26px;
  margin: 0 -2px 0 -2px;
  background: #ddd;
  flex: none;
}
.status {
  flex: none;
  height: 12px;
  overflow: hidden;
  position: relative;
  font-size: 11.500px;
}
.status span {
  display: flex;
  gap: 6px;
  align-items: center;
  position: absolute;
  top: 7px;
}
.s1 {
  left: -4px;
}
.s2 {
  left: 56px;
}
.s3 {
  left: 111px;
}
.s4 {
  left: 180px;
}
.coords {
  left: 265px;
}
.arrow {
  position: absolute;
  left: 1252px;
  top: 582px;
  width: 100px;
  height: 90px;
}
</style>
